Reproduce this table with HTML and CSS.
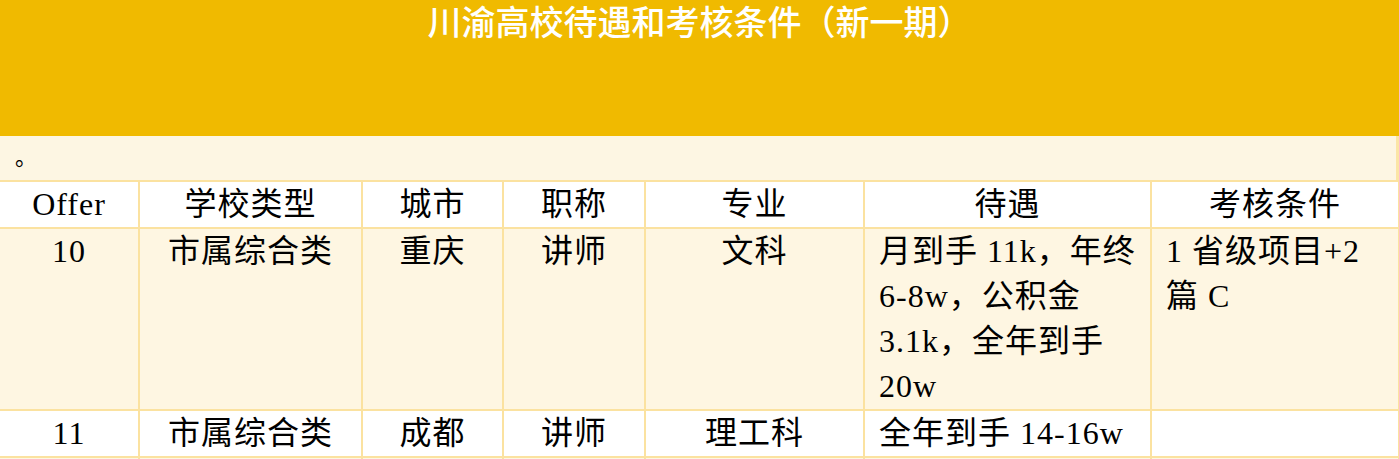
FILE: index.html
```html
<!DOCTYPE html>
<html lang="zh-CN">
<head>
<meta charset="utf-8">
<title>川渝高校待遇和考核条件（新一期）</title>
<link rel="stylesheet" href="styles.css">
</head>
<body>
<header class="banner">
  <h1 class="title">川渝高校待遇和考核条件（新一期）</h1>
</header>
<div class="note">。</div>
<table class="offers">
  <colgroup>
    <col class="c-offer">
    <col class="c-type">
    <col class="c-city">
    <col class="c-rank">
    <col class="c-major">
    <col class="c-pay">
    <col class="c-req">
  </colgroup>
  <thead>
    <tr class="row-white">
      <th>Offer</th>
      <th>学校类型</th>
      <th>城市</th>
      <th>职称</th>
      <th>专业</th>
      <th>待遇</th>
      <th>考核条件</th>
    </tr>
  </thead>
  <tbody>
    <tr class="row-cream">
      <td>10</td>
      <td>市属综合类</td>
      <td>重庆</td>
      <td>讲师</td>
      <td>文科</td>
      <td class="left">月到手 11k，年终<br>6-8w，公积金<br>3.1k，全年到手<br>20w</td>
      <td class="left">1 省级项目+2<br>篇 C</td>
    </tr>
    <tr class="row-white">
      <td>11</td>
      <td>市属综合类</td>
      <td>成都</td>
      <td>讲师</td>
      <td>理工科</td>
      <td class="left">全年到手 14-16w</td>
      <td class="left"></td>
    </tr>
    <tr class="row-cream">
      <td>&nbsp;</td>
      <td></td>
      <td></td>
      <td></td>
      <td></td>
      <td class="left"></td>
      <td class="left"></td>
    </tr>
  </tbody>
</table>
</body>
</html>
```

FILE: styles.css
```css
html, body {
  margin: 0;
  padding: 0;
}
body {
  background: #fdf6e3;
  width: 1399px;
  overflow: hidden;
}
.banner {
  background: #f0ba00;
  height: 136px;
  padding-top: 1px;
  box-sizing: border-box;
}
.title {
  margin: 0;
  text-align: center;
  color: #ffffff;
  font-family: "Noto Sans CJK SC", "Noto Sans", sans-serif;
  font-weight: 500;
  font-size: 34px;
  line-height: 40px;
}
.note {
  height: 44px;
  line-height: 44px;
  padding-left: 15px;
  font-family: "Liberation Serif", "Noto Sans CJK SC", serif;
  font-size: 22px;
  color: #000;
  border-right: 3px solid #fbe5a6;
  box-sizing: border-box;
}
.offers {
  width: 1399px;
  table-layout: fixed;
  border-collapse: collapse;
  font-family: "Liberation Serif", "Noto Sans CJK SC", serif;
  font-size: 32px;
  letter-spacing: 1px;
  color: #000;
}
.c-offer { width: 139px; }
.c-type { width: 223px; }
.c-city { width: 141px; }
.c-rank { width: 142px; }
.c-major { width: 219px; }
.c-pay { width: 287px; }
.c-req { width: 248px; }
.offers th,
.offers td {
  border: 2px solid #fbe2a0;
  padding: 0;
  line-height: 45px;
  height: 45px;
  text-align: center;
  vertical-align: top;
  font-weight: normal;
  white-space: nowrap;
}
.offers th:first-child,
.offers td:first-child {
  border-left: none;
}
.offers td.left {
  text-align: left;
  padding-left: 14px;
}
.row-white {
  background: #ffffff;
}
.row-cream {
  background: #fef6e2;
}
```
